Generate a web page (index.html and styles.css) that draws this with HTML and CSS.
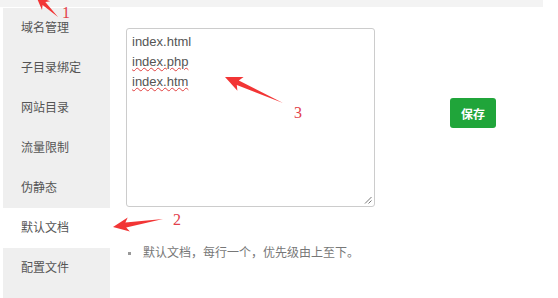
FILE: index.html
```html
<!DOCTYPE html>
<html lang="zh-CN">
<head>
<meta charset="utf-8">
<title>默认文档</title>
<link rel="stylesheet" href="styles.css">
</head>
<body>
<div class="topbar"></div>
<div class="layout">
  <ul class="side-menu">
    <li>域名管理</li>
    <li>子目录绑定</li>
    <li>网站目录</li>
    <li>流量限制</li>
    <li>伪静态</li>
    <li class="active">默认文档</li>
    <li>配置文件</li>
  </ul>
  <div class="content">
    <div class="editor-row">
      <div class="doc-box">
        <div class="line">index.html</div>
        <div class="line"><span class="misspelled">index.php</span></div>
        <div class="line"><span class="misspelled">index.htm</span></div>
        <svg class="grip" width="8" height="8" viewBox="0 0 8 8"><path d="M1 7.5L7.5 1M4.5 7.5L7.5 4.5" stroke="#777" stroke-width="1" fill="none"/></svg>
      </div>
      <button class="btn-save">保存</button>
    </div>
    <ul class="help">
      <li>默认文档，每行一个，优先级由上至下。</li>
    </ul>
  </div>
</div>
<svg class="annotations" width="558" height="298" viewBox="0 0 558 298">
  <polygon fill="#f23535" points="36,-4 50.2,1.3 45.3,2.1 58,17 42.6,5 42,10"/>
  <text x="62" y="18" class="num">1</text>
  <polygon fill="#f23535" points="113,227 127.7,217.6 125.4,222.4 163,219 126.2,227.4 129.9,231.4"/>
  <text x="173" y="225" class="num">2</text>
  <polygon fill="#f23535" points="225,77 243.6,77.1 238.8,80.4 283,103 236.8,85 237.4,90.8"/>
  <text x="294" y="118" class="num">3</text>
</svg>
</body>
</html>
```
FILE: styles.css
```css
html, body {
  margin: 0;
  padding: 0;
  background: #fff;
}
body {
  width: 558px;
  height: 298px;
  overflow: hidden;
  position: relative;
  font-family: "Liberation Sans", "Noto Sans CJK SC", sans-serif;
}
.topbar {
  width: 543px;
  height: 7px;
  background: #f3f3f3;
  margin-bottom: 1px;
}
.layout {
  display: flex;
  padding-left: 3px;
  height: 290px;
}
.side-menu {
  list-style: none;
  margin: 0;
  padding: 0;
  width: 107px;
  background: #efefef;
  flex-shrink: 0;
}
.side-menu li {
  height: 40px;
  line-height: 40px;
  padding-left: 18px;
  font-size: 12px;
  color: #555;
}
.side-menu li.active {
  background: #fff;
}
.content {
  padding: 20px 0 0 16px;
}
.editor-row {
  display: flex;
  align-items: flex-start;
}
.doc-box {
  position: relative;
  box-sizing: border-box;
  width: 249px;
  height: 179px;
  border: 1px solid #ccc;
  border-radius: 3px;
  padding: 3px 5px;
  font-size: 13px;
  line-height: 20px;
  color: #555;
}
.misspelled {
  text-decoration: underline wavy #e04040;
  text-decoration-thickness: 1px;
  text-underline-offset: 1px;
}
.grip {
  position: absolute;
  right: 2px;
  bottom: 2px;
}
.btn-save {
  margin: 70px 0 0 75px;
  height: 30px;
  padding: 0 11px;
  border: none;
  border-radius: 3px;
  background: #20a53a;
  color: #fff;
  font-family: "Liberation Sans", "Noto Sans CJK SC", sans-serif;
  font-size: 12px;
  font-weight: bold;
}
.help {
  list-style: none;
  margin: 36px 0 0;
  padding: 0;
}
.help li {
  position: relative;
  padding-left: 17px;
  font-size: 12px;
  line-height: 20px;
  color: #777;
}
.help li::before {
  content: "";
  position: absolute;
  left: 2px;
  top: 9px;
  width: 3px;
  height: 3px;
  background: #999;
}
.annotations {
  position: absolute;
  left: 0;
  top: 0;
  pointer-events: none;
}
.num {
  font-family: "Liberation Serif", serif;
  font-size: 16px;
  fill: #e2404a;
}
```
